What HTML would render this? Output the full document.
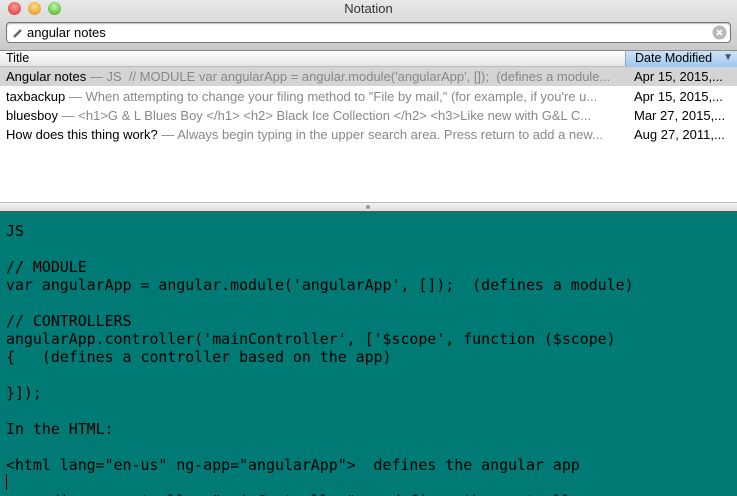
<!DOCTYPE html>
<html><head><style>
*{margin:0;padding:0;box-sizing:border-box}
body{width:737px;height:496px;overflow:hidden;font-family:"Liberation Sans",sans-serif;background:#fff;position:relative}
.tb{position:absolute;left:0;top:0;width:737px;height:51px;background:linear-gradient(#e8e8e8,#c9c9c9);border-bottom:1px solid #8a8a8a}
.title{position:absolute;top:1px;width:737px;text-align:center;font-size:13px;color:#333}
.dot{position:absolute;top:2px;width:13px;height:13px;border-radius:50%}
.search{position:absolute;left:6px;top:22px;width:725px;height:21px;background:#fff;border:1px solid #777;border-radius:4px;box-shadow:inset 0 1px 1px #bbb}
.search span{position:absolute;left:20px;top:2px;font-size:13px;color:#000}
.hdr{position:absolute;top:51px;left:0;width:737px;height:16px;background:linear-gradient(#fff,#e6e6e6);border-bottom:1px solid #bbb;font-size:12.5px}
.row{position:absolute;left:0;width:737px;height:19px;font-size:13px;line-height:19px;white-space:nowrap}
.row .t{position:absolute;left:6px;width:612px;overflow:hidden}
.row .d{position:absolute;left:634px}
.g{color:#888}
.ed{position:absolute;left:0;top:211px;width:737px;height:285px;background:#007a74;border-top:1px solid #555;overflow:hidden}
pre{position:absolute;left:6px;top:10px;font-family:"DejaVu Sans Mono","Liberation Mono",monospace;font-size:14.9px;line-height:18px;color:#000}
</style></head><body>
<div class="tb">
<div class="dot" style="left:8px;background:radial-gradient(circle at 50% 35%,#f99,#d0302a)"></div>
<div class="dot" style="left:28px;background:radial-gradient(circle at 50% 35%,#fd8,#d9901a)"></div>
<div class="dot" style="left:48px;background:radial-gradient(circle at 50% 35%,#bf9,#4a9c2a)"></div>
<div class="title">Notation</div>
<div class="search"><svg style="position:absolute;left:5px;top:4px" width="12" height="12"><path d="M2 10 L9 3" stroke="#666" stroke-width="2.5"/></svg><span>angular notes</span>
<svg style="position:absolute;left:705px;top:2px" width="15" height="15"><circle cx="7.5" cy="7.5" r="7" fill="#b8b8b8"/><path d="M5 5L10 10M10 5L5 10" stroke="#fff" stroke-width="1.6"/></svg></div>
</div>
<div class="hdr"><span style="position:absolute;left:6px;top:0px">Title</span>
<div style="position:absolute;left:625px;top:0;width:112px;height:16px;background:linear-gradient(#cfe3f7,#9cc6ee);border-left:1px solid #9ab"><span style="position:absolute;left:9px;top:0px">Date Modified</span><span style="position:absolute;right:4px;top:1px;font-size:10px;color:#456">▼</span></div></div>
<div class="row" style="top:67px;background:#d4d4d4"><div class="t">Angular notes <span class="g">— JS &nbsp;// MODULE var angularApp = angular.module('angularApp', []); &nbsp;(defines a module...</span></div><div class="d">Apr 15, 2015,...</div></div>
<div class="row" style="top:87px"><div class="t">taxbackup <span class="g">— When attempting to change your filing method to "File by mail," (for example, if you're u...</span></div><div class="d">Apr 15, 2015,...</div></div>
<div class="row" style="top:106px"><div class="t">bluesboy <span class="g">— &lt;h1&gt;G &amp; L Blues Boy &lt;/h1&gt; &lt;h2&gt; Black Ice Collection &lt;/h2&gt; &lt;h3&gt;Like new with G&amp;L C...</span></div><div class="d">Mar 27, 2015,...</div></div>
<div class="row" style="top:125px"><div class="t">How does this thing work? <span class="g">— Always begin typing in the upper search area. Press return to add a new...</span></div><div class="d">Aug 27, 2011,...</div></div>
<div style="position:absolute;top:202px;left:0;width:737px;height:9px;background:linear-gradient(#f4f4f4,#dcdcdc);border-top:1px solid #bbb"><div style="position:absolute;left:366px;top:2px;width:4px;height:4px;border-radius:50%;background:#999"></div></div>
<div class="ed"><pre>JS

// MODULE
var angularApp = angular.module('angularApp', []);  (defines a module)

// CONTROLLERS
angularApp.controller('mainController', ['$scope', function ($scope)
{   (defines a controller based on the app)

}]);

In the HTML:

&lt;html lang="en-us" ng-app="angularApp"&gt;  defines the angular app

    &lt;div ng-controller="mainController"&gt;   defines the controller</pre>
<div style="position:absolute;left:6px;top:262px;width:1px;height:16px;background:#000"></div></div>
</body></html>
